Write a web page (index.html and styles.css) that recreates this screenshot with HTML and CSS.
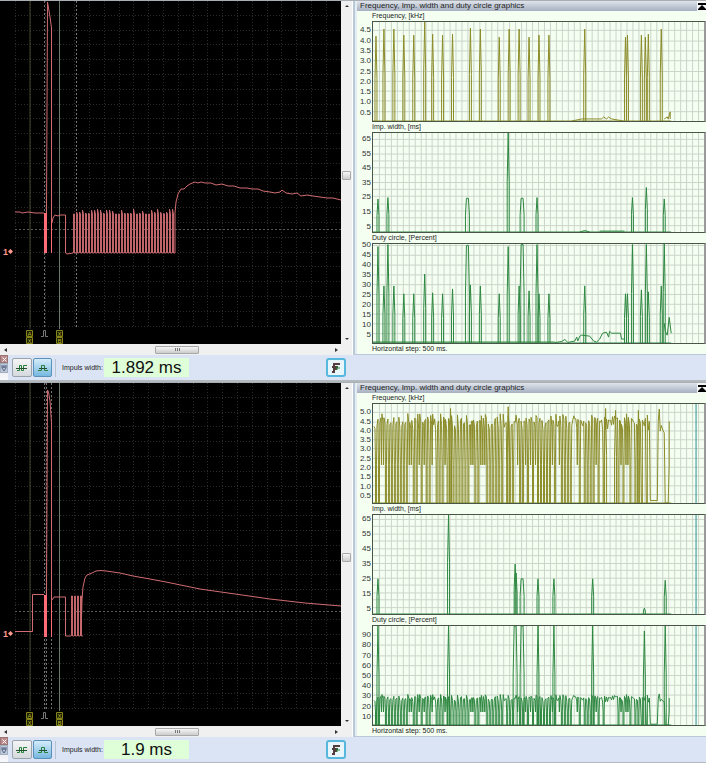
FILE: index.html
```
<!DOCTYPE html>
<html lang="en">
<head>
<meta charset="utf-8">
<title>Oscilloscope</title>
<link rel="stylesheet" href="styles.css">
</head>
<body>
<main class="app">
  <section class="unit">
    <div class="work">
      <div class="scope">
        <svg class="screen" data-scope="0" viewBox="0 0 341 343" preserveAspectRatio="xMinYMin slice" role="img" aria-label="Signal trace"></svg>
        <div class="vscroll">
          <button class="arrow" aria-label="Scroll up"><svg viewBox="0 0 4 2"><path d="M0 2L2 0L4 2Z"/></svg></button>
          <span class="thumb"></span>
          <button class="arrow" aria-label="Scroll down"><svg viewBox="0 0 4 2"><path d="M0 0L2 2L4 0Z"/></svg></button>
        </div>
        <div class="hscroll">
          <button class="arrow" aria-label="Scroll left"><svg viewBox="0 0 3 4"><path d="M3 0L0 2L3 4Z"/></svg></button>
          <span class="thumb"><i></i></span>
          <button class="arrow" aria-label="Scroll right"><svg viewBox="0 0 3 4"><path d="M0 0L3 2L0 4Z"/></svg></button>
        </div>
      </div>
      <section class="panel">
        <header class="title"><h2>Frequency, Imp. width and duty circle graphics</h2>
          <button class="collapse" aria-label="Collapse"><svg viewBox="0 0 8 7"><path d="M0 0H8V2H0ZM4 2L8 6H0ZM0 6H8V7H0Z"/></svg></button></header>
        <h3 class="label">Frequency, [kHz]</h3>
        <div class="chart" data-chart="0"></div>
        <h3 class="label">Imp. width, [ms]</h3>
        <div class="chart" data-chart="1"></div>
        <h3 class="label">Duty circle, [Percent]</h3>
        <div class="chart" data-chart="2"></div>
        <p class="label">Horizontal step: 500 ms.</p>
      </section>
    </div>
    <div class="toolbar">
      <div class="grip">
        <button class="close" aria-label="Close"><svg viewBox="0 0 5 5"><path d="M.5 .5L4.5 4.5M4.5 .5L.5 4.5"/></svg></button>
        <button class="pin" aria-label="Options"><svg viewBox="0 0 6 8"><path d="M1 1V4L3 7L5 4V1M3 1V4M1 3H5"/></svg></button>
      </div>
      <button class="tool" aria-label="Frequency mode"><svg viewBox="0 0 12 8"><path class="g" d="M1 6.5H3.5V1.5H5.5V6.5H7.5V1.5H11"/><path class="d" d="M0 4.5H11"/></svg></button>
      <button class="tool active" aria-label="Pulse width mode"><svg viewBox="0 0 12 8"><path class="g" d="M1 6.5H4.5V1.5H7.5V6.5H11"/><path class="d" d="M2 4.5H10"/></svg></button>
      <label class="caption" for="width1">Impuls width:</label>
      <output class="value" id="width1">1.892 ms</output>
      <button class="tool settings" aria-label="Measure settings"><svg viewBox="0 0 10 12"><path class="b" d="M3 11V2H9M1 5H7M3 7H6M1 10H4"/><path class="g" d="M6 6H9M6 4V8"/></svg></button>
    </div>
  </section>

  <section class="unit">
    <div class="work">
      <div class="scope">
        <svg class="screen" data-scope="1" viewBox="0 0 341 343" preserveAspectRatio="xMinYMin slice" role="img" aria-label="Signal trace"></svg>
        <div class="vscroll">
          <button class="arrow" aria-label="Scroll up"><svg viewBox="0 0 4 2"><path d="M0 2L2 0L4 2Z"/></svg></button>
          <span class="thumb"></span>
          <button class="arrow" aria-label="Scroll down"><svg viewBox="0 0 4 2"><path d="M0 0L2 2L4 0Z"/></svg></button>
        </div>
        <div class="hscroll">
          <button class="arrow" aria-label="Scroll left"><svg viewBox="0 0 3 4"><path d="M3 0L0 2L3 4Z"/></svg></button>
          <span class="thumb"><i></i></span>
          <button class="arrow" aria-label="Scroll right"><svg viewBox="0 0 3 4"><path d="M0 0L3 2L0 4Z"/></svg></button>
        </div>
      </div>
      <section class="panel">
        <header class="title"><h2>Frequency, Imp. width and duty circle graphics</h2>
          <button class="collapse" aria-label="Collapse"><svg viewBox="0 0 8 7"><path d="M0 0H8V2H0ZM4 2L8 6H0ZM0 6H8V7H0Z"/></svg></button></header>
        <h3 class="label">Frequency, [kHz]</h3>
        <div class="chart" data-chart="3"></div>
        <h3 class="label">Imp. width, [ms]</h3>
        <div class="chart" data-chart="4"></div>
        <h3 class="label">Duty circle, [Percent]</h3>
        <div class="chart" data-chart="5"></div>
        <p class="label">Horizontal step: 500 ms.</p>
      </section>
    </div>
    <div class="toolbar">
      <div class="grip">
        <button class="close" aria-label="Close"><svg viewBox="0 0 5 5"><path d="M.5 .5L4.5 4.5M4.5 .5L.5 4.5"/></svg></button>
        <button class="pin" aria-label="Options"><svg viewBox="0 0 6 8"><path d="M1 1V4L3 7L5 4V1M3 1V4M1 3H5"/></svg></button>
      </div>
      <button class="tool" aria-label="Frequency mode"><svg viewBox="0 0 12 8"><path class="g" d="M1 6.5H3.5V1.5H5.5V6.5H7.5V1.5H11"/><path class="d" d="M0 4.5H11"/></svg></button>
      <button class="tool active" aria-label="Pulse width mode"><svg viewBox="0 0 12 8"><path class="g" d="M1 6.5H4.5V1.5H7.5V6.5H11"/><path class="d" d="M2 4.5H10"/></svg></button>
      <label class="caption" for="width2">Impuls width:</label>
      <output class="value" id="width2">1.9 ms</output>
      <button class="tool settings" aria-label="Measure settings"><svg viewBox="0 0 10 12"><path class="b" d="M3 11V2H9M1 5H7M3 7H6M1 10H4"/><path class="g" d="M6 6H9M6 4V8"/></svg></button>
    </div>
  </section>
</main>
<script src="charts.js"></script>
</body>
</html>
```
FILE: styles.css
```
* { box-sizing: border-box; }
body {
  margin: 0;
  background: #fff;
  color: #222;
  font: 7px/10px "Liberation Sans", Arial, sans-serif;
}
h2, h3, p { margin: 0; font: inherit; }
button { padding: 0; border: 0; background: none; font: inherit; }
svg { display: block; }
.app { margin-right: 7px; }

.unit { border-bottom: 2px solid #b4b9be; }
.unit:last-child { border-bottom-width: 1px; }
.work {
  display: grid;
  grid-template-columns: minmax(0, 352fr) minmax(0, 354fr);
  border-top: 1px solid #a9aeb2;
}

.scope {
  display: grid;
  grid-template: 343px 11px / minmax(0, 1fr) 11px;
  background: #f0f0f0;
}
.screen { width: 100%; height: 100%; background: #000; }
.grid { stroke: #2b2b2b; stroke-dasharray: 1 2; fill: none; }
.axis { stroke: #5a5a5a; stroke-dasharray: 2 2; }
.cursor-a { stroke: #48482c; }
.cursor-b { stroke: #66796a; }
.cursor-t { stroke: #747474; stroke-dasharray: 2 2; }
.trace { stroke: #d06c70; stroke-width: 1; fill: none; stroke-linejoin: round; }
.pulses { stroke: #c0666a; stroke-width: 1; fill: none; }
.burst { fill: #ff6c78; }
.channel { fill: #ff9a90; font-size: 9px; font-weight: bold; }
.channel-mark { fill: #ff9a90; }
.tag { fill: #1c1c00; stroke: #85851c; }
.tag-text { fill: #b8b82a; font-size: 6px; text-anchor: middle; }
.trigger { stroke: #777; fill: none; }

.vscroll, .hscroll { display: flex; align-items: center; justify-content: space-between; }
.vscroll { flex-direction: column; padding: 4px 0; }
.hscroll { grid-column: 1 / -1; padding: 0 14px 0 4px; }
.arrow { display: flex; fill: #333; }
.vscroll .arrow svg { width: 4px; height: 2px; }
.hscroll .arrow svg { width: 3px; height: 4px; }
.thumb { border: 1px solid #a8a8a8; border-radius: 1px; background: linear-gradient(#f6f6f6, #ccc); }
.vscroll .thumb { width: 9px; height: 9px; margin-top: 6px; }
.hscroll .thumb { display: flex; justify-content: center; width: 44px; height: 8px; margin-left: 12px; }
.thumb i { width: 5px; height: 3px; margin-top: 1px; background: repeating-linear-gradient(90deg, #777 0 1px, transparent 1px 2px); }

.panel {
  display: flex;
  flex-direction: column;
  border: solid #b9c9d8;
  border-width: 0 0 1px 2px;
  padding-left: 2px;
  margin-left: 1px;
  background: #f4fff2;
  box-shadow: inset 2px 0 #e4ecf4;
}
.title {
  display: flex;
  align-items: center;
  justify-content: space-between;
  height: 10px;
  padding-left: 3px;
  background: linear-gradient(#dfe4ec, #a6b0c1);
  font-size: 8px;
  line-height: 12px;
}
.collapse { display: flex; align-items: center; justify-content: center; width: 9px; height: 10px; background: #f4f6f8; }
.collapse svg { width: 8px; height: 7px; }
.label { height: 10px; padding-left: 15px; }
.chart { display: flex; height: 101px; }
.ticks { flex: none; width: 15px; height: 101px; overflow: visible; fill: #333; }
.ticks text { font-size: 8px; text-anchor: end; }
.plot { flex: 1; min-width: 0; height: 101px; border: 1px solid #485648; border-right: 2px solid #9a9a9a; }
.plot path { fill: none; vector-effect: non-scaling-stroke; }
.plot .mesh { stroke: #cbd5ca; }
.plot .freq { stroke: #8c8c28; }
.plot .green { stroke: #2d8740; }
.plot .now { stroke: #2f8f94; }

.toolbar {
  display: flex;
  align-items: center;
  height: 25px;
  background: #dbe4f4;
}
.grip { display: flex; flex-direction: column; align-self: stretch; width: 8px; margin-right: 4px; background: linear-gradient(#d8dce4, #f8f9fb); }
.close, .pin { display: flex; align-items: center; justify-content: center; width: 8px; height: 8px; border: 1px solid #9a7777; background: #bd8a8a; }
.close svg { width: 5px; height: 5px; stroke: #fff; }
.pin { height: 10px; border-color: #a3afc0; background: #bdc9da; }
.pin svg { width: 6px; height: 8px; stroke: #536581; fill: none; }
.tool {
  display: flex;
  align-items: center;
  justify-content: center;
  flex: none;
  width: 20px;
  height: 19px;
  margin-right: 1px;
  border: 1px solid #9aa3ab;
  border-radius: 2px;
  background: linear-gradient(#f5f5f5, #d5d9dd);
}
.tool svg { flex: none; width: 12px; height: 8px; fill: none; stroke-width: 1; }
.tool .g { stroke: #258039; }
.tool .d { stroke: #245030; }
.tool .b { stroke: #553d3d; stroke-width: 2; }
.active { width: 19px; border-color: #5b91b8; background: linear-gradient(#d3ecfa, #78b8df); }
.caption { margin-left: 2px; padding-left: 6px; width: 49px; border-left: 1px solid #b9c2d0; line-height: 18px; white-space: nowrap; }
.value { width: 85px; height: 19px; background: #dfffd9; color: #111; font-size: 17px; line-height: 19px; text-align: center; }
.settings { margin-left: 137px; border: 2px solid #55b8dc; border-radius: 3px; background: #e8f5fa; }
.settings svg { width: 10px; height: 12px; }
```
FILE: charts.js
```
const NS = "http://www.w3.org/2000/svg";

function add(parent, name, attrs, text) {
  const el = document.createElementNS(NS, name);
  for (const key in attrs) el.setAttribute(key, attrs[key]);
  if (text !== undefined) el.textContent = text;
  parent.appendChild(el);
  return el;
}

function randomSource(seed) {
  return () => (seed = (seed * 16807) % 2147483647) / 2147483647;
}

// Spikes are [x, peak, width]; x runs over a 333-unit time axis.
const freqSpikes = [[3,4.2],[11,4.55],[21,4.55],[31,4.25],[41,4.25],[52,4.9],[60,4.3],[70,4.25],[80,4.3],[98,4.6],[108,4.55],[127,4.15],[137,4.55],[147,4.55],[157,4.15],[167,4.25],[177,4.25],[213,4.55],[254,4.15],[256,4.25],[270,4.25],[274,4.15],[277,4.3],[290,4.55]];
const widthSpikes = [[5,23],[15,24],[95,23.5,2],[136,70],[150,23.5,2],[165,24],[261,24],[275,31],[293,23]];
const dutySpikes = [[5,49],[11,29],[15,50],[21,29],[31,25],[41,25],[52,35],[60,25.5],[70,25],[80,27.5],[95,49.5,2],[98,29.5],[108,29],[127,25],[136,49],[147,29],[150,50,2],[157,26.5],[165,50],[167,25],[177,25],[213,29],[254,25],[256,25],[261,50],[270,27],[275,50],[277,26],[290,29],[293,51]];
const widthSpikes2 = [[5,24],[76,70],[143,34],[144,28],[150,24,2],[166,24],[182,24],[221,24],[273,4],[294,23]];
const dutySpikes2 = [[5,100],[76,100],[143,100,2],[150,100,2],[166,100],[182,100],[221,100],[273,94],[294,100]];

const dutyTail = [[183,.2],[190,.8],[193,1.8],[196,.3],[203,1],[205,3],[206,1],[208,3.5],[210,4],[218,3.5],[222,1],[225,.5],[228,2],[231,5],[235,5.5],[237,3],[238,6],[240,5],[249,5],[250,2],[253,2]];
const dutyEnd = [[293,10],[294,6],[296,4],[298,13],[300,5]];
const freqTail = [[200,0],[210,.1],[230,.1],[232,.2],[235,.1],[237,.2],[240,.1],[252,0]];
const freqEnd = [[293,.1],[296,.2],[297,.1],[299,.45],[299,.1]];

// Continuous record that keeps dropping out to half level and zero.
function dense(high, spread, half, seed) {
  const r = randomSource(seed), pts = [];
  let x = 1;
  while (x < 278) {
    const quiet = (x > 232 && x < 243) || x > 266;
    const top = high + (r() - .4) * spread;
    pts.push([x, top], [x + 1, high + (r() - .7) * spread]);
    if (!quiet && r() < .85) {
      if (r() < .75) {
        pts.push([x + 1.5, half], [x + 1.5, 0], [x + 2.5, 0], [x + 2.5, half]);
        x += 3;
      } else {
        pts.push([x + 1.5, half]);
        x += 2;
      }
    } else if (quiet && x > 266 && r() < .4) {
      pts.push([x + 2, 0], [x + 3, 0]);
      x += 3;
    } else x += 2;
  }
  pts.push([278, high], [279, high * .03], [286, high * .03], [287, high], [288, high * 1.15], [289, high * .88], [290, high * .95], [292, high * .88], [293, high * .86], [294, 0], [297, 0], [298, half], [298, high]);
  return pts;
}

const charts = [
  { max: 4.9, from: .5, to: 4.5, step: .5, mesh: .5, digits: 1, kind: "freq", spikes: freqSpikes, lines: [freqTail, freqEnd] },
  { max: 69, from: 5, to: 65, step: 10, mesh: 5, digits: 0, kind: "green", spikes: widthSpikes, lines: [[[208,0],[213,1],[218,0]], [[228,.6],[253,.6]]] },
  { max: 50.3, from: 5, to: 50, step: 5, mesh: 5, digits: 0, kind: "green", spikes: dutySpikes, lines: [dutyTail, dutyEnd, [[0,.5],[183,.5]]] },
  { max: 5.45, from: .5, to: 5, step: .5, mesh: .5, digits: 1, kind: "freq", spikes: [[78,5.2],[136,5.3],[234,5.2],[244,5.1],[267,5.1]], lines: [dense(4.5, .7, 2.1, 77)], now: 325 },
  { max: 67.5, from: 5, to: 65, step: 10, mesh: 5, digits: 0, kind: "green", spikes: widthSpikes2, lines: [], now: 325 },
  { max: 99, from: 10, to: 90, step: 10, mesh: 10, digits: 0, kind: "green", spikes: dutySpikes2, lines: [dense(27, 6, 13, 77)], now: 325 }
];

function drawChart(host, c) {
  const y = v => Math.max(0, 101 - v * 101 / c.max).toFixed(1);
  const ticks = add(host, "svg", { class: "ticks", viewBox: "0 0 15 101" });
  for (let v = c.from; v <= c.to + .01; v += c.step)
    add(ticks, "text", { x: 14, y: +y(v) + 3 }, v.toFixed(c.digits));
  const plot = add(host, "svg", { class: "plot", viewBox: "0 0 333 101", preserveAspectRatio: "none" });
  let mesh = "";
  for (let v = c.mesh; v < c.max; v += c.mesh) mesh += `M0 ${Math.round(y(v)) + .5}H333`;
  for (let i = 1; i < 56; i++) mesh += `M${Math.round(i * 5.94) + .5} 0V101`;
  add(plot, "path", { class: "mesh", d: mesh });
  let d = "M0 101H300";
  for (const [x, peak, w = 1] of c.spikes)
    d += `M${x - w} 101V${y(peak / 2)}L${x - w + 1} ${y(peak)}H${x + w - 1}L${x + w} ${y(peak / 2)}V101`;
  for (const line of c.lines)
    d += "M" + line.map(p => p[0] + " " + y(p[1])).join("L");
  add(plot, "path", { class: c.kind, d });
  if (c.now) add(plot, "path", { class: "now", d: `M${c.now} 0V101` });
}

const scopes = [
  {
    trigger: [44.5, 76.5],
    trace: "M15 211L20 211L22 212L28 211L35 212L44 212M46.5 212L47.5 1L48.5 7L50 16L51.5 27V252M52 222L53 217L55 214L58 215L60 214L65.5 214V252L67 253L73 252M175 252V212L176 201L178 193L181 188L184 188L187 185L190 183L195 181L198 182L201 181L205 182L211 182L216 184L222 183L228 185L234 185L240 187L247 187L252 188L258 188L263 190L270 191L275 192L280 191L282 189L286 192L292 193L297 192L301 195L307 194L313 195L320 196L327 197L333 197L341 199",
    pulses: [73, 176, 213, 252], jitter: true, burst: [44, 212, 3, 40]
  },
  {
    trigger: [44.5, 46.5, 51.5],
    trace: "M15 248.5H32.5V211.5H44M46.5 212L47.5 7L48.5 9L50 18L51.5 40V253M52 217L54 214H65.5V253H71M81 253L82 217L83 204L85 195L87 192L92 190L96 188L101 187.5L106 188L120 190L133 193L150 196L166 199L200 206L235 211L270 216L305 220L341 223",
    pulses: [71, 82, 213, 253], jitter: false, burst: [44, 212, 3, 42]
  }
];

function drawScope(svg, s) {
  let grid = "";
  for (let i = 0; i < 23; i++) grid += `M${Math.round(15 + i * 14.8) + .5} 0V326`;
  for (let i = 1; i < 23; i++) grid += `M15 ${Math.round(i * 14.8) - .5}H341`;
  add(svg, "path", { class: "grid", d: grid });
  add(svg, "path", { class: "axis", d: "M15 228.5H341" });
  add(svg, "path", { class: "cursor-a", d: "M30 0V328" });
  add(svg, "path", { class: "cursor-b", d: "M59.5 0V328" });
  add(svg, "path", { class: "cursor-t", d: s.trigger.map(x => `M${x} 0V328`).join("") });
  const [x0, x1, top, bottom] = s.pulses, r = randomSource(19);
  let d = "";
  for (let x = x0; x < x1 - 1; x += 3) {
    const peak = s.jitter ? top - Math.round(r() * 5) : top;
    d += `M${x + .5} ${bottom}V${peak}L${x + 1.5} ${top}V${bottom}H${x + 3}`;
  }
  add(svg, "path", { class: "pulses", d });
  add(svg, "path", { class: "trace", d: s.trace });
  const [bx, by, bw, bh] = s.burst;
  add(svg, "rect", { class: "burst", x: bx, y: by, width: bw, height: bh });
  add(svg, "rect", { class: "burst", x: 51, y: by + 8, width: 1, height: bh - 8 });
  add(svg, "text", { class: "channel", x: 3, y: 254 }, "1");
  add(svg, "path", { class: "channel-mark", d: "M8 250.5L10.5 248L13 250.5L10.5 253Z" });
  for (const [x, a, b] of [[29.5, "A", "X"], [59.5, "X", "B"]]) {
    add(svg, "path", { class: "tag", d: `M${x - 3} 329.5h6v6h-6zM${x - 3} 336.5h6v6h-6z` });
    add(svg, "text", { class: "tag-text", x, y: 335 }, a);
    add(svg, "text", { class: "tag-text", x, y: 342 }, b);
  }
  add(svg, "path", { class: "trigger", d: "M41 335.5H43.5V329.5H45.5V335.5H48" });
}

document.querySelectorAll("[data-chart]").forEach(el => drawChart(el, charts[el.dataset.chart]));
document.querySelectorAll("[data-scope]").forEach(el => drawScope(el, scopes[el.dataset.scope]));
```
